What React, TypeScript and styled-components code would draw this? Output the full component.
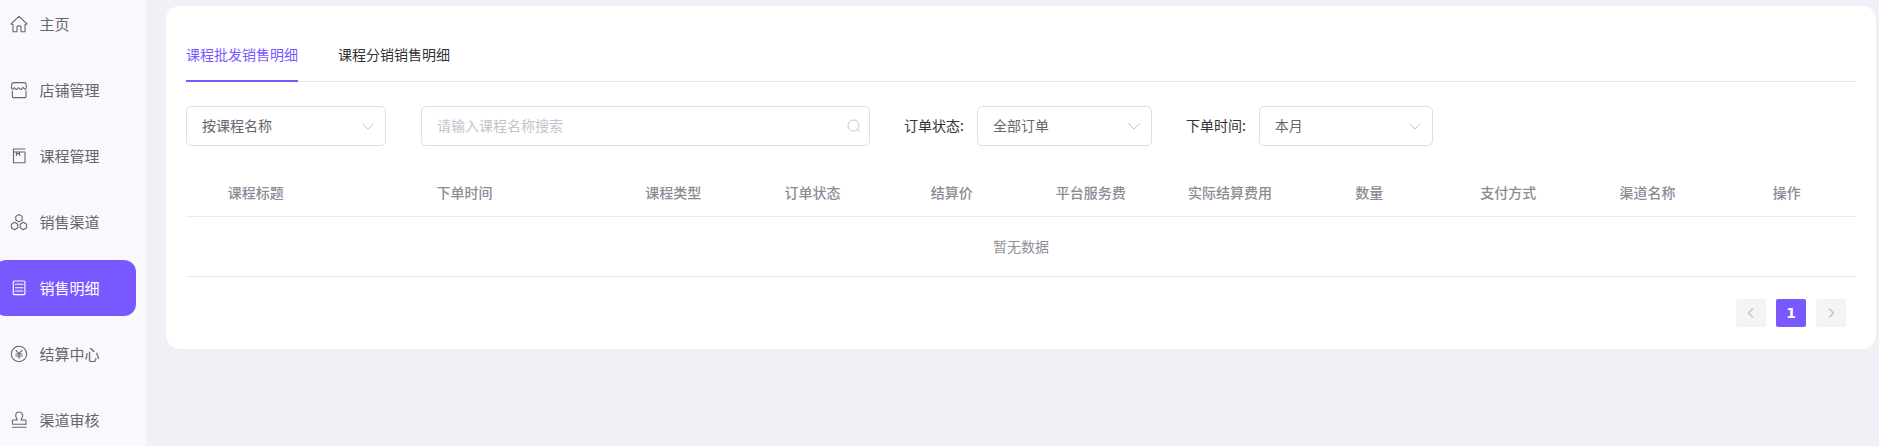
import React from "react";
import styled, { createGlobalStyle } from "styled-components";

const Global = createGlobalStyle`
  html, body { margin: 0; padding: 0; background: #f0f0f6; }
  * { box-sizing: border-box; }
  body { font-family: "Noto Sans CJK SC", "Liberation Sans", sans-serif; font-size: 14px; }
`;

const Shell = styled.div`
  display: flex;
  height: 446px;
  overflow: hidden;
`;
const Sidebar = styled.nav`
  flex: 0 0 146px;
  background: #f8f8fd;
  overflow: hidden;
`;
const NavList = styled.div`
  display: flex;
  flex-direction: column;
  gap: 10px;
  margin: -4px 0 0 -6px;
  width: 142px;
`;
const NavItem = styled.div<{ $active?: boolean }>`
  display: flex;
  align-items: center;
  gap: 11.5px;
  height: 56px;
  flex: none;
  padding-left: 16px;
  border-radius: 12px;
  font-size: 15px;
  color: ${(p) => (p.$active ? "#ffffff" : "#666670")};
  background: ${(p) => (p.$active ? "#7a58ff" : "transparent")};
`;
const NavText = styled.span`
  padding-bottom: 2px;
`;
const NavIcon = styled.svg`
  width: 18px;
  height: 18px;
  flex: none;
  fill: none;
  stroke: currentColor;
  stroke-width: 1.1;
  stroke-linejoin: round;
  stroke-linecap: round;
`;
const Main = styled.main`
  flex: 1;
  padding: 6px 3px 0 20px;
  min-width: 0;
`;
const Card = styled.section`
  background: #fff;
  border-radius: 14px;
  padding: 38px 20px 22px;
`;
const Tabs = styled.div`
  display: flex;
  gap: 40px;
  border-bottom: 1px solid #e6e6ee;
`;
const Tab = styled.div<{ $active?: boolean }>`
  line-height: 20px;
  padding-bottom: 16px;
  margin-bottom: -1px;
  color: ${(p) => (p.$active ? "#7a58ff" : "#333")};
  border-bottom: 2px solid ${(p) => (p.$active ? "#7a58ff" : "transparent")};
`;
const Filters = styled.div`
  display: flex;
  align-items: center;
  margin-top: 24px;
`;
const Field = styled.div<{ $w: number; $ml?: number }>`
  display: flex;
  align-items: center;
  justify-content: space-between;
  flex: none;
  width: ${(p) => p.$w}px;
  height: 40px;
  margin-left: ${(p) => p.$ml ?? 0}px;
  padding: 0 10px 0 15px;
  border: 1px solid #dcdfe9;
  border-radius: 5px;
  color: #666670;
`;
const FieldText = styled.span`
  padding-bottom: 2px;
`;
const Placeholder = styled(FieldText)`
  color: #c0c4cc;
`;
const Label = styled.span<{ $ml: number }>`
  margin-left: ${(p) => p.$ml}px;
  margin-right: 13px;
  padding-bottom: 2px;
  color: #333;
  white-space: nowrap;
`;
const FieldIcon = styled.svg`
  width: 14px;
  height: 14px;
  flex: none;
  fill: none;
  stroke: #c0c4cc;
  stroke-width: 1;
`;
const SearchIcon = styled(FieldIcon)`
  margin-right: -2px;
`;
const Row = styled.div`
  display: grid;
  grid-template-columns: 1fr 2fr repeat(9, 1fr);
  border-bottom: 1px solid #ebebf2;
`;
const Head = styled(Row)`
  margin-top: 24px;
  height: 47px;
  align-items: center;
`;
const HeadCell = styled.div`
  text-align: center;
  font-weight: 500;
  color: #8b8b96;
  padding: 0 0 2px 0.5px;
`;
const Empty = styled.div`
  height: 60px;
  display: flex;
  align-items: center;
  justify-content: center;
  padding-bottom: 2px;
  border-bottom: 1px solid #ebebf2;
  color: #909099;
`;
const Pager = styled.div`
  display: flex;
  justify-content: flex-end;
  gap: 10px;
  margin-top: 22px;
  padding-right: 10px;
`;
const PageBtn = styled.div<{ $active?: boolean }>`
  width: 30px;
  height: 28px;
  border-radius: 2px;
  display: flex;
  align-items: center;
  justify-content: center;
  background: ${(p) => (p.$active ? "#7a58ff" : "#f4f4f5")};
  color: ${(p) => (p.$active ? "#fff" : "#c0c4cc")};
  font: 700 14px "DejaVu Sans", sans-serif;
`;
const PageIcon = styled.svg`
  width: 12px;
  height: 12px;
  fill: none;
  stroke: currentColor;
  stroke-width: 1.5;
`;

const Chevron = () => (
  <FieldIcon viewBox="0 0 14 14"><path d="M1.5 4.5 7 10l5.5-5.5" /></FieldIcon>
);

const navItems: { label: string; active?: boolean; icon: React.ReactNode }[] = [
  { label: "主页", icon: <path d="M9 1.4 1 9 3 9.8V16.8H7V11.8C7 10.6 11 10.6 11 11.8V16.8H15V9.8L17 9Z" /> },
  { label: "店铺管理", icon: <><path d="M3.4 1.6H14.6C15.4 1.6 15.8 2.2 16 3L16.4 6.6C16.4 8.4 14.6 8.8 14 7.6 13.4 6.2 12.6 6.2 12 7.6 11.4 8.6 10.2 8.6 9.4 7.6 8.8 6.4 8.2 6.4 7.6 7.6 7 8.6 5.6 8.6 5 7.6 4.4 6.4 3.8 6.6 3.4 7.6 3 8.6 1.4 8.2 1.4 6.6L1.8 3C2 2.2 2.6 1.6 3.4 1.6Z" /><path d="M2.4 10V15.6C2.4 16.2 2.8 16.6 3.4 16.6H15C15.6 16.6 16 16.2 16 15.6V10" /></> },
  { label: "课程管理", icon: <><path d="M3.5 2H15M3.5 2V15.7H15V5H3.5" /><path d="M6.4 8.4V5M9.6 8.4V5M6.4 6.6H9.6" /></> },
  { label: "销售渠道", icon: <><path d="M9 1.5l3.2 1.9v3.6L9 8.9 5.8 7V3.4Z" /><path d="M4.6 9.3l3.2 1.9v3.6l-3.2 1.9-3.2-1.9v-3.6Z" /><path d="M13.4 9.3l3.2 1.9v3.6l-3.2 1.9-3.2-1.9v-3.6Z" /></> },
  { label: "销售明细", active: true, icon: <><rect x="3.3" y="2" width="11.6" height="13.6" rx="1" /><path d="M5.4 5.3H12.9M5.4 8.7H12.9M5.4 12H12.9" /></> },
  { label: "结算中心", icon: <><circle cx="9" cy="9" r="7.7" /><path d="M6 5.4 9 8.6l3-3.2M9 8.6V13.2M5.9 9H12.1M5.9 11H12.1" /></> },
  { label: "渠道审核", icon: <><path d="M7 9C7 7 5.7 6.5 5.7 4.5a3.5 3.5 0 0 1 7 0C12.7 6.5 11.3 7 11.3 9" /><path d="M7 9H3C2.6 9 2.4 9.2 2.4 9.6V13.3H16V9.6C16 9.2 15.8 9 15.4 9H11.3" /><path d="M2.4 16.3H16" /></> },
];

const headers = ["课程标题", "下单时间", "课程类型", "订单状态", "结算价", "平台服务费", "实际结算费用", "数量", "支付方式", "渠道名称", "操作"];

export default function App() {
  return (
    <Shell>
      <Global />
      <Sidebar>
        <NavList>
          {navItems.map((n) => (
            <NavItem key={n.label} $active={n.active}>
              <NavIcon viewBox="0 0 18 18">{n.icon}</NavIcon>
              <NavText>{n.label}</NavText>
            </NavItem>
          ))}
        </NavList>
      </Sidebar>
      <Main>
        <Card>
          <Tabs>
            <Tab $active>课程批发销售明细</Tab>
            <Tab>课程分销销售明细</Tab>
          </Tabs>
          <Filters>
            <Field $w={200}><FieldText>按课程名称</FieldText><Chevron /></Field>
            <Field $w={449} $ml={35}>
              <Placeholder>请输入课程名称搜索</Placeholder>
              <SearchIcon viewBox="0 0 14 14">
                <circle cx="6.5" cy="6.5" r="5.5" />
                <path d="m10.5 10.5 2.5 2.5" />
              </SearchIcon>
            </Field>
            <Label $ml={34}>订单状态:</Label>
            <Field $w={175}><FieldText>全部订单</FieldText><Chevron /></Field>
            <Label $ml={34}>下单时间:</Label>
            <Field $w={174}><FieldText>本月</FieldText><Chevron /></Field>
          </Filters>
          <Head>
            {headers.map((h) => <HeadCell key={h}>{h}</HeadCell>)}
          </Head>
          <Empty>暂无数据</Empty>
          <Pager>
            <PageBtn><PageIcon viewBox="0 0 12 12"><path d="M8 1.5 3.5 6 8 10.5" /></PageIcon></PageBtn>
            <PageBtn $active>1</PageBtn>
            <PageBtn><PageIcon viewBox="0 0 12 12"><path d="M4 1.5 8.5 6 4 10.5" /></PageIcon></PageBtn>
          </Pager>
        </Card>
      </Main>
    </Shell>
  );
}
